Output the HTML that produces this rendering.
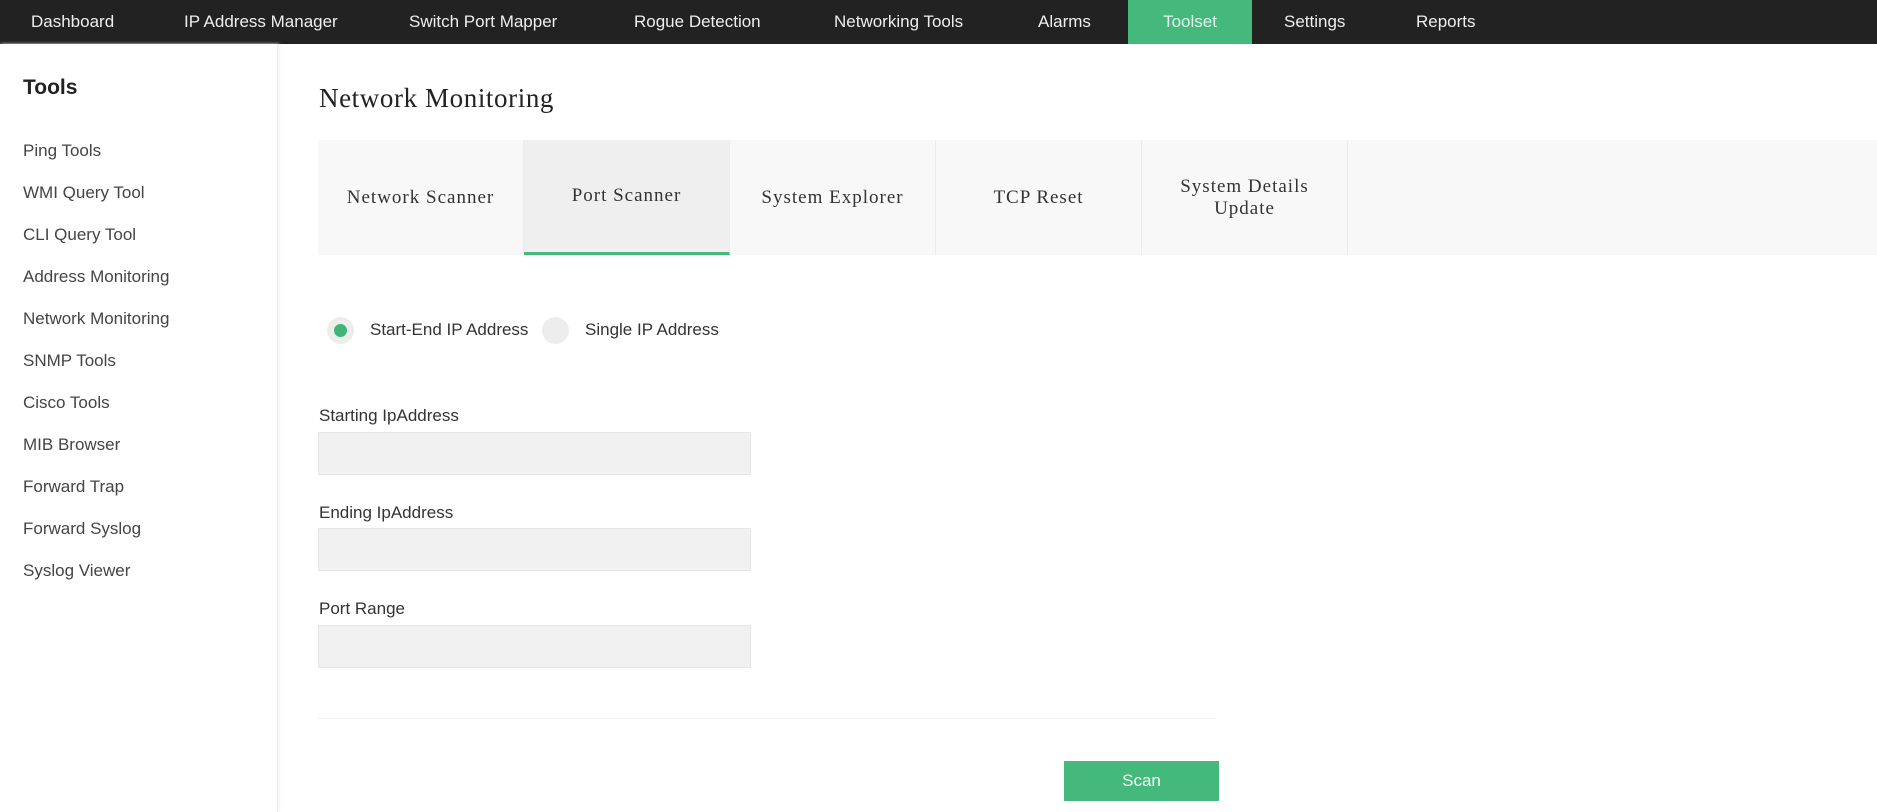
<!DOCTYPE html>
<html><head><meta charset="utf-8"><style>
*{margin:0;padding:0;box-sizing:border-box}
body{width:1877px;height:812px;background:#fff;font-family:"Liberation Sans",sans-serif;color:#333;position:relative;overflow:hidden}
.nav{position:absolute;left:0;top:0;width:1877px;height:44px;background:#222;}
.nav span{position:absolute;top:0;line-height:44px;font-size:17px;color:#eee}
.nav .act{background:#45b97c;color:#e3f5ea;width:124px;text-align:center;left:1128px}
.side{position:absolute;left:0;top:44px;width:278px;height:768px;border-right:1px solid #ececec;box-shadow:1px 0 3px #f0f0f0}
.side h3{position:absolute;left:23px;top:32px;font-size:21px;color:#222;font-weight:bold}
.side div{position:absolute;left:23px;font-size:17px;color:#444}
.title{position:absolute;left:319px;top:83px;font-family:"Liberation Serif",serif;font-size:27px;letter-spacing:0.6px;color:#222}
.tabs{position:absolute;left:318px;top:140px;width:1559px;height:115px;background:#f8f8f8}
.tab{position:absolute;top:0;height:115px;width:206px;border-right:1px solid #ececec;display:flex;align-items:center;justify-content:center;text-align:center;font-family:"Liberation Serif",serif;font-size:19px;letter-spacing:1px;color:#333;line-height:22px}
.tab.on{background:#efefef;border-bottom:3px solid #45b97c}
.radio{position:absolute;top:317px;width:27px;height:27px;border-radius:50%;background:#ededed}
.radio.on::after{content:"";position:absolute;left:7px;top:7px;width:13px;height:13px;border-radius:50%;background:#3fb677}
.rl{position:absolute;top:320px;font-size:17px;color:#333}
.lbl{position:absolute;left:319px;font-size:17px;color:#333}
.inp{position:absolute;left:318px;width:433px;height:43px;background:#f1f1f1;border:1px solid #e6e6e6}
.div{position:absolute;left:318px;top:718px;width:898px;height:1px;background:#f0f0f0}
.btn{position:absolute;left:1064px;top:761px;width:155px;height:40px;background:#45b97c;font-size:17px;text-align:center;line-height:40px;color:#f2fff6}
</style></head><body>
<div class="nav">
<span style="left:31px">Dashboard</span>
<span style="left:184px">IP Address Manager</span>
<span style="left:409px">Switch Port Mapper</span>
<span style="left:634px">Rogue Detection</span>
<span style="left:834px">Networking Tools</span>
<span style="left:1038px">Alarms</span>
<span class="act">Toolset</span>
<span style="left:1284px">Settings</span>
<span style="left:1416px">Reports</span>
</div>
<div class="side">
<h3>Tools</h3>
<div style="top:97px">Ping Tools</div>
<div style="top:139px">WMI Query Tool</div>
<div style="top:181px">CLI Query Tool</div>
<div style="top:223px">Address Monitoring</div>
<div style="top:265px">Network Monitoring</div>
<div style="top:307px">SNMP Tools</div>
<div style="top:349px">Cisco Tools</div>
<div style="top:391px">MIB Browser</div>
<div style="top:433px">Forward Trap</div>
<div style="top:475px">Forward Syslog</div>
<div style="top:517px">Syslog Viewer</div>
</div>
<div class="title">Network Monitoring</div>
<div class="tabs">
<div class="tab" style="left:0">Network Scanner</div>
<div class="tab on" style="left:206px">Port Scanner</div>
<div class="tab" style="left:412px">System Explorer</div>
<div class="tab" style="left:618px">TCP Reset</div>
<div class="tab" style="left:824px">System Details<br>Update</div>
</div>
<div class="radio on" style="left:327px"></div>
<div class="rl" style="left:370px">Start-End IP Address</div>
<div class="radio" style="left:542px"></div>
<div class="rl" style="left:585px">Single IP Address</div>
<div class="lbl" style="top:406px">Starting IpAddress</div>
<div class="inp" style="top:432px"></div>
<div class="lbl" style="top:503px">Ending IpAddress</div>
<div class="inp" style="top:528px"></div>
<div class="lbl" style="top:599px">Port Range</div>
<div class="inp" style="top:625px"></div>
<div class="div"></div>
<div class="btn">Scan</div>
</body></html>
